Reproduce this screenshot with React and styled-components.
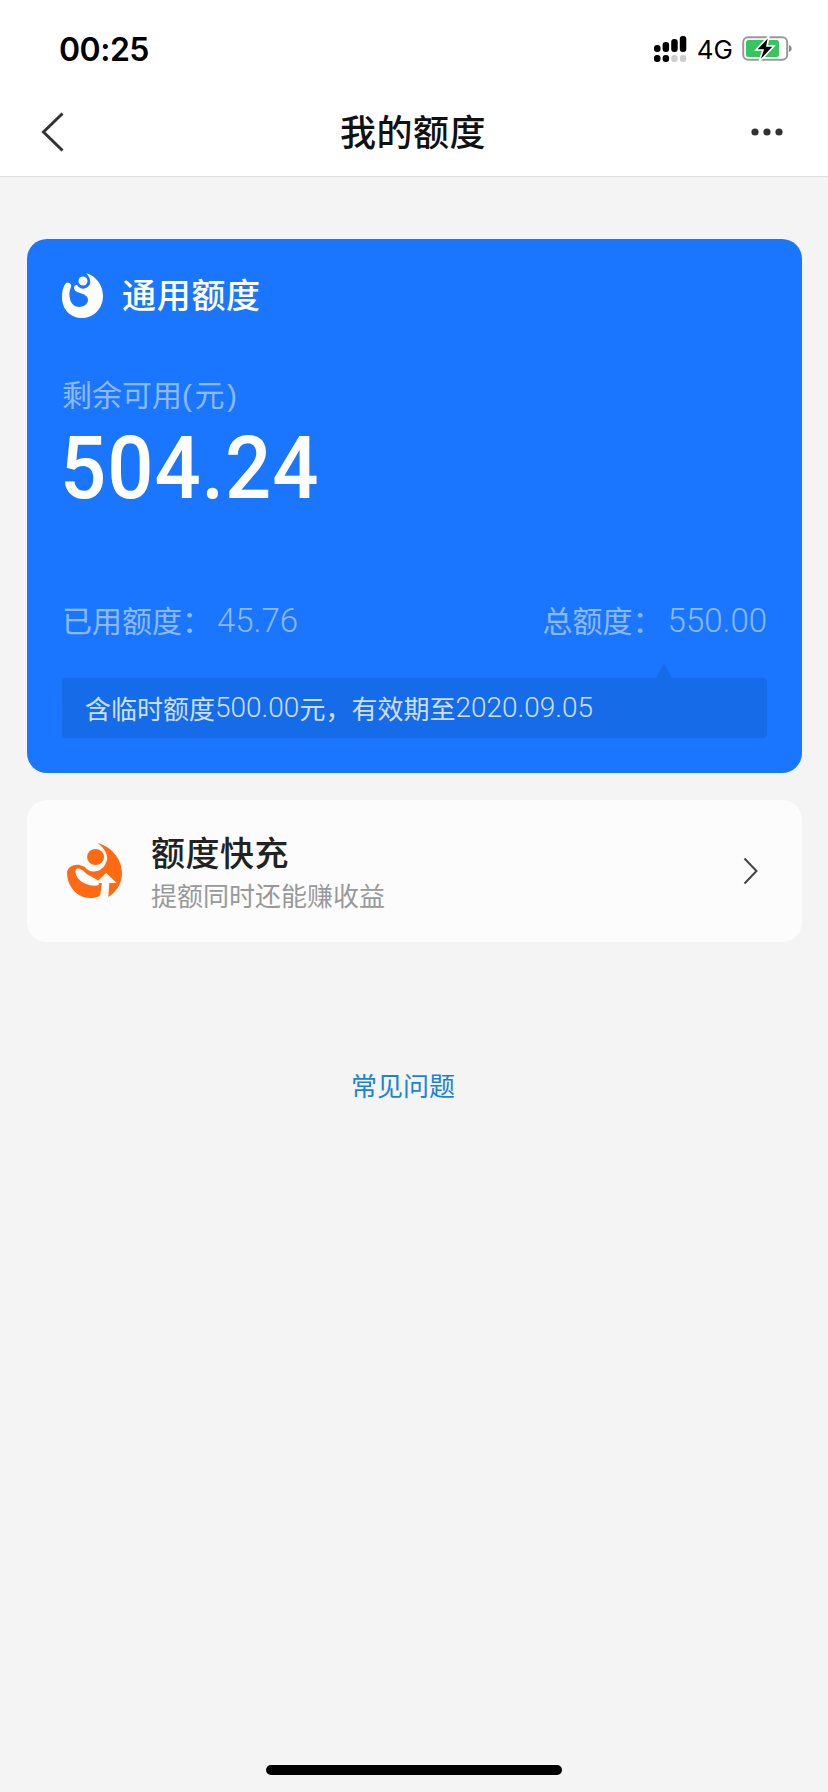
import React from 'react';
import styled, { createGlobalStyle } from 'styled-components';

const GlobalStyle = createGlobalStyle`
  html, body {
    margin: 0;
    padding: 0;
    background: #f4f4f4;
  }
  * {
    box-sizing: border-box;
  }
`;

const FONT = `"Liberation Sans", "Noto Sans CJK SC", sans-serif`;
const LIGHT_NUMBERS = `Roboto, "Noto Sans CJK SC", sans-serif`;

const Page = styled.div`
  width: 828px;
  height: 1792px;
  display: flex;
  flex-direction: column;
  overflow: hidden;
  background: #f4f4f4;
  font-family: ${FONT};
`;

const TopBar = styled.header`
  background: #fff;
  border-bottom: 1px solid #dedede;
`;

const StatusBar = styled.div`
  height: 88px;
  padding: 10px 36px 0 59px;
  display: flex;
  align-items: center;
  justify-content: space-between;
`;

const Time = styled.span`
  font-family: Inter, sans-serif;
  font-size: 32px;
  font-weight: 600;
  letter-spacing: -0.5px;
  color: #000;
`;

const StatusIcons = styled.div`
  display: flex;
  align-items: center;
  gap: 9px;
`;

const Network = styled.span`
  font-family: Inter, sans-serif;
  font-size: 26px;
  color: #000;
`;

const NavBar = styled.nav`
  height: 88px;
  padding: 0 45px 0 41px;
  display: grid;
  grid-template-columns: 1fr auto 1fr;
  align-items: center;
`;

const NavEnd = styled.div`
  display: flex;
  justify-content: flex-end;
`;

const NavStart = styled.div`
  display: flex;
`;

const NavTitle = styled.h1`
  margin: 3px 0 0 2px;
  font-size: 36px;
  line-height: 44px;
  font-weight: 500;
  letter-spacing: 0.5px;
  color: #111;
`;

const Content = styled.main`
  padding: 62px 26px 0 27px;
  display: flex;
  flex-direction: column;
  gap: 27px;
`;

const QuotaCard = styled.section`
  height: 534px;
  padding: 35px 35px 35px;
  display: flex;
  flex-direction: column;
  border-radius: 20px;
  background: #1a76ff;
  color: #fff;
`;

const CardHead = styled.div`
  display: flex;
  align-items: center;
  gap: 18px;
  height: 44px;
`;

const CardTitle = styled.h2`
  margin: 0;
  font-size: 34px;
  line-height: 44px;
  font-weight: 500;
  letter-spacing: 0.7px;
`;

const BalanceLabel = styled.div`
  margin-top: 57px;
  font-size: 30px;
  line-height: 42px;
  color: rgba(255, 255, 255, 0.5);
`;

const LabelUnit = styled.span`
  letter-spacing: 2.5px;
`;

const Balance = styled.div`
  margin: 5px 0 0 -2px;
  font-family: Roboto, sans-serif;
  font-size: 88px;
  line-height: 92px;
  font-weight: 500;
  letter-spacing: 1px;
  transform: scaleX(0.925);
  transform-origin: left center;
`;

const UsageRow = styled.div`
  margin-top: auto;
  display: flex;
  justify-content: space-between;
  font-size: 30px;
  line-height: 42px;
  color: rgba(255, 255, 255, 0.5);
`;

const UsageValue = styled.span`
  margin-left: 5px;
  font-family: ${LIGHT_NUMBERS};
  font-size: 33px;
  font-weight: 300;
`;

const Notice = styled.div`
  position: relative;
  height: 60px;
  margin-top: 35px;
  padding: 0 23px 2px;
  display: flex;
  align-items: center;
  border-radius: 4px;
  background: #166ce8;
  font-size: 26px;
  color: rgba(255, 255, 255, 0.8);
  white-space: pre;

  &::before {
    content: '';
    position: absolute;
    left: 594px;
    top: -15px;
    border-left: 8px solid transparent;
    border-right: 8px solid transparent;
    border-bottom: 15px solid #166ce8;
  }
`;

const NoticeNumber = styled.span`
  font-family: ${LIGHT_NUMBERS};
  font-size: 28px;
  font-weight: 300;
`;

const BoostCard = styled.section`
  height: 142px;
  padding: 0 44px 0 40px;
  display: flex;
  align-items: center;
  border-radius: 20px;
  background: #fcfcfc;
`;

const BoostText = styled.div`
  margin-left: 29px;
  padding-top: 6px;
  flex: 1;
`;

const BoostTitle = styled.div`
  font-size: 34px;
  line-height: 44px;
  font-weight: 500;
  letter-spacing: 0.5px;
  color: #222;
`;

const BoostHint = styled.div`
  margin-top: 1px;
  font-size: 26px;
  line-height: 40px;
  color: #999;
`;

const FaqLink = styled.a`
  margin-top: 125px;
  padding-right: 22px;
  font-size: 26px;
  line-height: 40px;
  color: #1a83d8;
  text-align: center;
`;

const HomeBar = styled.div`
  width: 296px;
  height: 10px;
  margin: auto auto 17px;
  border-radius: 5px;
  background: #000;
`;

function SignalIcon() {
  const top = [7, 10, 13, 16];
  return (
    <svg width="34" height="26" viewBox="0 0 34 26">
      {top.map((h, i) => (
        <rect key={i} x={i * 8.6} y={16 - h} width="6.5" height={h} rx="3" fill="#000" />
      ))}
      {top.map((_, i) => (
        <rect key={i} x={i * 8.6} y="19" width="6.5" height="7" rx="3" fill={i < 2 ? '#000' : '#ccc'} />
      ))}
    </svg>
  );
}

function BatteryIcon() {
  return (
    <svg width="50" height="26" viewBox="0 0 50 26">
      <rect x="1.2" y="1.2" width="44" height="22.6" rx="5" fill="none" stroke="#999" strokeWidth="2" />
      <path d="M47 9 C49 10 49.6 11 49.6 12.5 C49.6 14 49 15 47 16 Z" fill="#888" />
      <rect x="4" y="4" width="33" height="17" rx="2.5" fill="#36c55f" />
      <path d="M27 0 L14 14 H21 L17 26 L32 10 H25 Z" fill="#000" stroke="#fff" strokeWidth="1.6" />
    </svg>
  );
}

function BackIcon() {
  return (
    <svg width="24" height="40" viewBox="0 0 24 40">
      <path d="M21.5 1.5 L2.5 20 L21.5 38.5" fill="none" stroke="#333" strokeWidth="3" />
    </svg>
  );
}

function MoreIcon() {
  return (
    <svg width="32" height="8" viewBox="0 0 32 8">
      <circle cx="4" cy="4" r="3.6" fill="#333" />
      <circle cx="16" cy="4" r="3.6" fill="#333" />
      <circle cx="28" cy="4" r="3.6" fill="#333" />
    </svg>
  );
}

function QuotaLogo() {
  return (
    <svg width="42" height="46" viewBox="0 0 42 46">
      <path
        d="M24 0 C34 3 41 12 41 23 C41 35 32 45 20 45 C9 45 0 37 0 24 C0 18 1 14 4 10 C7 9 10 11 9 14 C7 18 7 22 8 26 C9 31 13 34 17 34 C22 34 26 31 26 27 C26 23 22 21 18 20 C14 19 12 17 12 15 C12 13 13 12 15 12 C18 17 25 17 28 11 C29 7 27 3 24 0 Z"
        fill="#fff"
      />
      <circle cx="21" cy="8" r="4.5" fill="#fff" />
    </svg>
  );
}

function BoostLogo() {
  return (
    <svg width="55" height="56" viewBox="0 0 52 56" preserveAspectRatio="none">
      <path
        d="M29 0 C43 4 52 17 52 30 C52 40 47 49 39 54 L32 52 C28 55 25 55 22 55 C10 55 0 44 0 29 C1 24 6 21 12 22 L17 24 C21 31 35 31 38 16 C38 9 34 4 29 0 Z"
        fill="#ff6a13"
      />
      <circle cx="27" cy="14" r="8" fill="#ff6a13" />
      <path d="M9 26 C13 24 16 29 20 32 C24 34 27 36 30 38 L30 42 C24 44 15 41 11 36 C8 32 7 28 9 26 Z" fill="#fcfcfc" />
      <path d="M37 30 L47 40 L40 40 L39 55 L31 55 L33 40 L27 40 Z" fill="#fcfcfc" />
    </svg>
  );
}

function ChevronIcon() {
  return (
    <svg width="15" height="28" viewBox="0 0 15 28">
      <path d="M1.5 1.5 L13.5 14 L1.5 26.5" fill="none" stroke="#444" strokeWidth="2" />
    </svg>
  );
}

export default function App() {
  return (
    <Page>
      <GlobalStyle />
      <TopBar>
        <StatusBar>
          <Time>00:25</Time>
          <StatusIcons>
            <SignalIcon />
            <Network>4G</Network>
            <BatteryIcon />
          </StatusIcons>
        </StatusBar>
        <NavBar>
          <NavStart><BackIcon /></NavStart>
          <NavTitle>我的额度</NavTitle>
          <NavEnd><MoreIcon /></NavEnd>
        </NavBar>
      </TopBar>
      <Content>
        <QuotaCard>
          <CardHead>
            <QuotaLogo />
            <CardTitle>通用额度</CardTitle>
          </CardHead>
          <BalanceLabel>剩余可用<LabelUnit>(元)</LabelUnit></BalanceLabel>
          <Balance>504.24</Balance>
          <UsageRow>
            <span>已用额度：<UsageValue>45.76</UsageValue></span>
            <span>总额度：<UsageValue>550.00</UsageValue></span>
          </UsageRow>
          <Notice>
            含临时额度<NoticeNumber>500.00</NoticeNumber>元，有效期至<NoticeNumber>2020.09.05</NoticeNumber>
          </Notice>
        </QuotaCard>
        <BoostCard>
          <BoostLogo />
          <BoostText>
            <BoostTitle>额度快充</BoostTitle>
            <BoostHint>提额同时还能赚收益</BoostHint>
          </BoostText>
          <ChevronIcon />
        </BoostCard>
      </Content>
      <FaqLink>常见问题</FaqLink>
      <HomeBar />
    </Page>
  );
}
